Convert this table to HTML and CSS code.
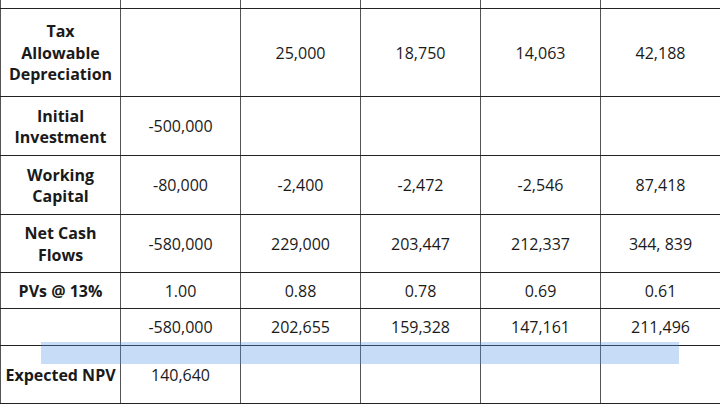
FILE: index.html
```html
<!DOCTYPE html>
<html>
<head>
<meta charset="utf-8">
<link rel="stylesheet" href="styles.css">
</head>
<body>
<div class="wrap">
<table class="npv">
  <colgroup><col class="c"><col class="c"><col class="c"><col class="c"><col class="c"><col class="c"></colgroup>
  <tr class="r-top"><td></td><td></td><td></td><td></td><td></td><td></td></tr>
  <tr class="r-tall"><th>Tax<br>Allowable<br>Depreciation</th><td></td><td>25,000</td><td>18,750</td><td>14,063</td><td>42,188</td></tr>
  <tr class="r-mid"><th>Initial Investment</th><td>-500,000</td><td></td><td></td><td></td><td></td></tr>
  <tr class="r-mid"><th>Working Capital</th><td>-80,000</td><td>-2,400</td><td>-2,472</td><td>-2,546</td><td>87,418</td></tr>
  <tr class="r-mid2"><th>Net Cash Flows</th><td>-580,000</td><td>229,000</td><td>203,447</td><td>212,337</td><td>344, 839</td></tr>
  <tr class="r-small"><th>PVs @ 13%</th><td>1.00</td><td>0.88</td><td>0.78</td><td>0.69</td><td>0.61</td></tr>
  <tr class="r-small2"><th></th><td>-580,000</td><td>202,655</td><td>159,328</td><td>147,161</td><td>211,496</td></tr>
  <tr class="r-last"><th>Expected NPV</th><td>140,640</td><td></td><td></td><td></td><td></td></tr>
</table>
<div class="highlight"></div>
</div>
</body>
</html>
```
FILE: styles.css
```css
html, body {
  margin: 0;
  padding: 0;
  background: #fff;
}
.wrap {
  position: relative;
  width: 720px;
  height: 405px;
  overflow: hidden;
}
.npv {
  border-collapse: collapse;
  table-layout: fixed;
  width: 720px;
  font-family: "Open Sans", sans-serif;
  font-size: 16px;
  line-height: 21.5px;
  color: #1a1a1a;
}
.npv .c {
  width: 120px;
}
.npv th, .npv td {
  border-top: 1px solid #222;
  border-bottom: 1px solid #222;
  border-left: 1px solid #555;
  border-right: 1px solid #555;
  padding: 2px 4px 0;
  text-align: center;
  vertical-align: middle;
}
.npv th {
  font-weight: 700;
}
.npv td {
  font-weight: 400;
}
.r-top td { border-top: none; height: 8px; padding: 0; }
.r-tall th, .r-tall td { height: 85px; }
.r-mid th, .r-mid td { height: 56px; }
.r-mid2 th, .r-mid2 td { height: 55px; }
.r-small th, .r-small td { height: 33px; }
.r-small2 th, .r-small2 td { height: 34px; }
.r-last th, .r-last td { height: 55px; }
.highlight {
  position: absolute;
  left: 41px;
  top: 342px;
  width: 638px;
  height: 22px;
  background: rgba(80, 145, 230, 0.32);
  pointer-events: none;
}
```
